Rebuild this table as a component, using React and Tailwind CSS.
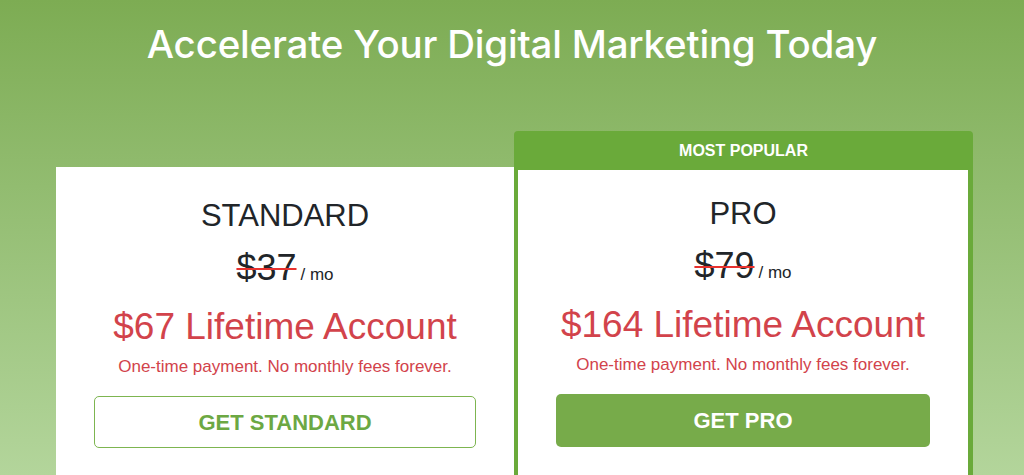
export default function App() {
  return (
    <div className="h-[475px] overflow-hidden bg-linear-to-b from-[#7dac53] to-[#b3d59b] font-['Liberation_Sans',Arial,sans-serif]">
      <h1 className="pt-[21px] text-center font-['Inter',sans-serif] text-[38.5px] leading-[46px] font-medium tracking-[-0.2px] text-white">
        Accelerate Your Digital Marketing Today
      </h1>

      <div className="mt-[64px] ml-[56px] flex items-start">
        {/* standard */}
        <div className="mt-[36px] w-[458px] bg-white px-[38px] pt-[30px] pb-[40px] text-center">
          <PlanBody name="STANDARD" old="$37" price="$67" />
          <button className="mt-[17px] flex h-[52px] w-full items-center justify-center rounded-[5px] border border-[#7db550] text-[22px] font-bold text-[#6ca843]">
            GET STANDARD
          </button>
        </div>

        {/* pro */}
        <div className="w-[459px] overflow-hidden rounded-t-[4px] bg-[#6aaa3a]">
          <div className="flex h-[39px] items-center justify-center text-[16px] font-bold text-white">
            MOST POPULAR
          </div>
          <div className="mr-[5px] ml-[4px] bg-white px-[38px] pt-[25px] pb-[40px] text-center">
            <PlanBody name="PRO" old="$79" price="$164" />
            <button className="mt-[17px] flex h-[53px] w-full items-center justify-center rounded-[5px] bg-[#77ab4a] text-[22px] font-bold text-white">
              GET PRO
            </button>
          </div>
        </div>
      </div>
    </div>
  );
}

function PlanBody({ name, old, price }) {
  return (
    <>
      <h2 className="text-[31px] leading-[37px] text-[#212529]">{name}</h2>
      <div className="mt-[12px] flex items-baseline justify-center text-[#212529]">
        <span className="text-[36px] leading-[43px] line-through decoration-[#e8322f] decoration-2">{old}</span>
        <span className="ml-[4px] text-[17px]">/ mo</span>
      </div>
      <p className="mt-[16px] text-[37px] leading-[43px] text-[#d2434b]">{price} Lifetime Account</p>
      <p className="mt-[7px] text-[17px] leading-[24px] text-[#d2434b]">One-time payment. No monthly fees forever.</p>
    </>
  );
}
